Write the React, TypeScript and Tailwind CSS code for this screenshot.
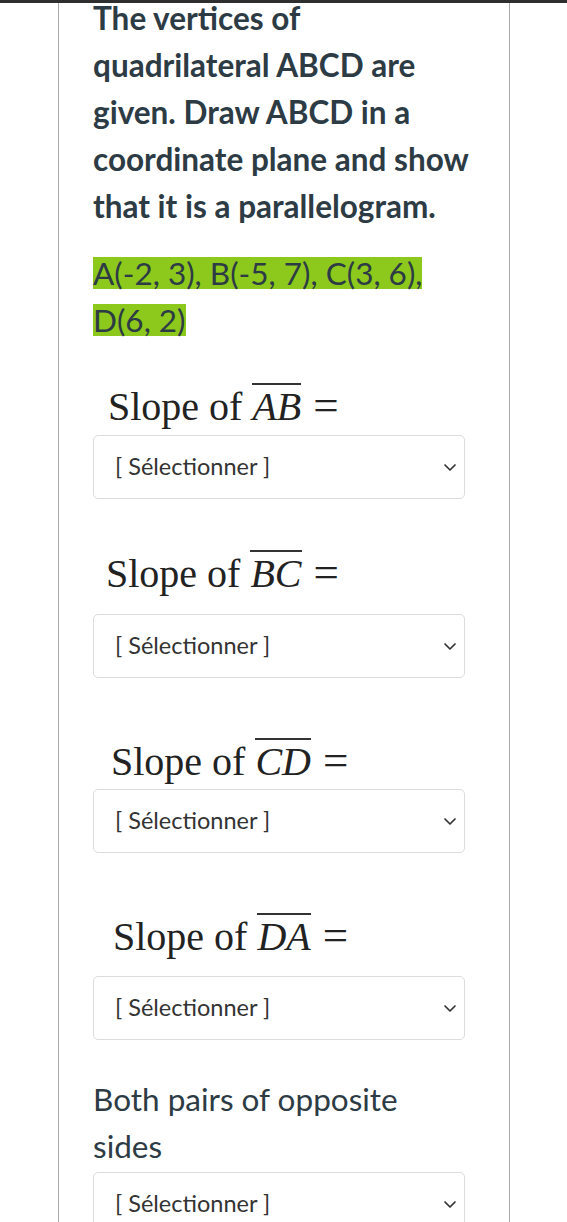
import React from "react";

const lato = { fontFamily: "Lato, 'Noto Sans', sans-serif" };

function Chevron() {
  return (
    <svg viewBox="0 0 16 16" className="h-[16px] w-[16px]" fill="none">
      <path d="M3 6l5 5 5-5" stroke="#333" strokeWidth="1.7" strokeLinecap="round" strokeLinejoin="round" />
    </svg>
  );
}

function Select({ className = "" }: { className?: string }) {
  return (
    <div
      className={`flex h-[64px] w-[372px] items-center justify-between rounded-[5px] border border-[#dcdcdc] bg-white pl-[21px] pr-[6px] text-[23.5px] text-[#333] ${className}`}
    >
      <span>[ Sélectionner ]</span>
      <Chevron />
    </div>
  );
}

function Slope({ seg, className = "" }: { seg: string; className?: string }) {
  return (
    <div
      className={`flex h-[50px] items-center text-[#222] ${className}`}
      style={{ fontFamily: "'Liberation Serif', 'Times New Roman', serif" }}
    >
      <span className="text-[40px] leading-none">
        Slope of&nbsp;
        <span className="inline-block border-t-2 border-[#333] pt-[2px] italic">{seg}</span>
        <span className="ml-[12px] text-[45px]">=</span>
      </span>
    </div>
  );
}

function Mark({ children }: { children: React.ReactNode }) {
  return (
    <div className="flex h-[47px] items-center">
      <span className="inline-block h-[32px] bg-[#8cc91c] leading-[32px]">{children}</span>
    </div>
  );
}

export default function App() {
  return (
    <div className="min-h-[1222px] overflow-hidden bg-white" style={lato}>
      <div className="fixed inset-x-0 top-0 z-10 h-[3px] bg-[#2e2e2e]" />
      <div className="ml-[58px] min-h-[1240px] w-[452px] border-x border-[#a8a8a8] pl-[34px] pr-[34px] text-[#2d3b45]">
        <h2 className="mt-[-5px] text-[31.5px] font-bold leading-[47px]">
          The vertices of quadrilateral ABCD are given. Draw ABCD in a coordinate plane and show that it is a
          parallelogram.
        </h2>
        <div className="mt-[19px] text-[31.5px]">
          <Mark>A(-2, 3), B(-5, 7), C(3, 6),</Mark>
          <Mark>D(6, 2)</Mark>
        </div>
        <Slope seg="AB" className="mt-[37px] ml-[15px]" />
        <Select className="mt-[5px]" />
        <Slope seg="BC" className="mt-[48px] ml-[13px]" />
        <Select className="mt-[17px]" />
        <Slope seg="CD" className="mt-[57px] ml-[18px]" />
        <Select className="mt-[4px]" />
        <Slope seg="DA" className="mt-[57px] ml-[20px]" />
        <Select className="mt-[16px]" />
        <p className="mt-[36px] w-[360px] text-[31.5px] leading-[47px]">Both pairs of opposite sides</p>
        <Select className="mt-[2px]" />
      </div>
    </div>
  );
}
